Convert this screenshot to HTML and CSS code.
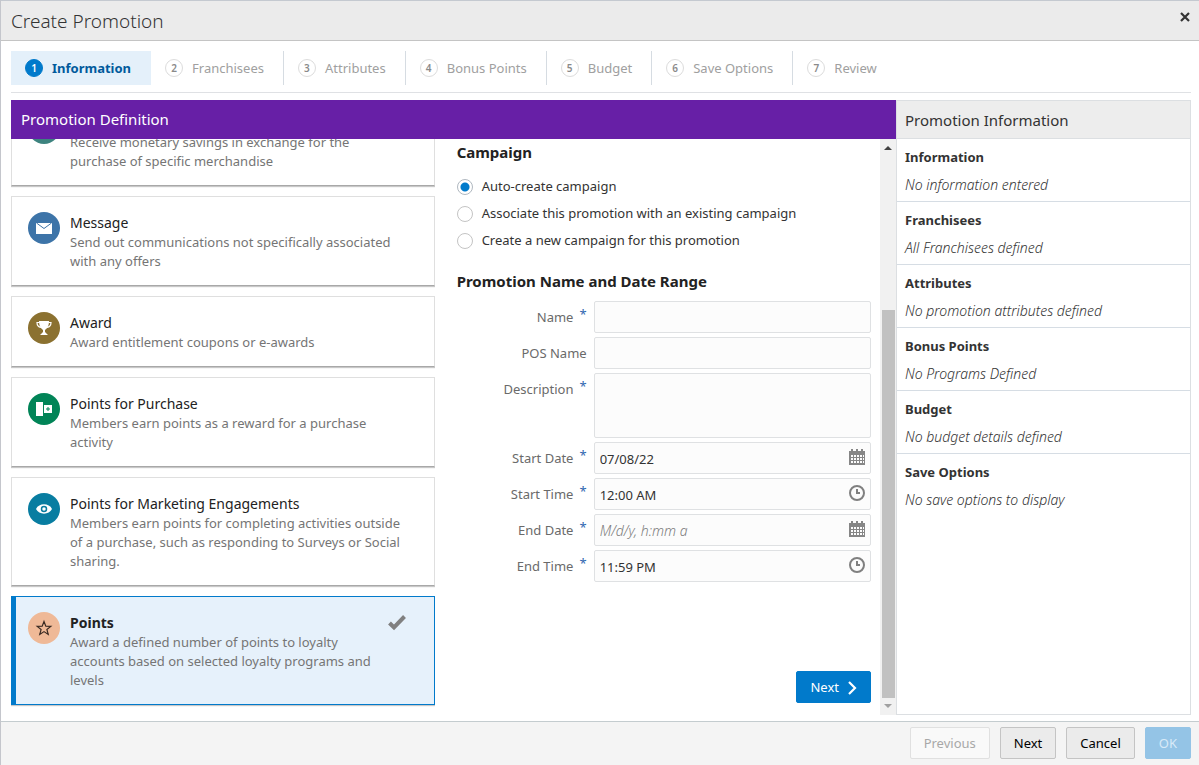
FILE: index.html
```html
<!DOCTYPE html>
<html lang="en">
<head>
    <meta charset="UTF-8">
    <meta name="viewport" content="width=device-width, initial-scale=1.0">
    <title>Create Promotion</title>
    <link rel="stylesheet" href="styles.css">
</head>
<body>
    <header class="dialog-header">
        <h1>Create Promotion</h1>
        <button class="close" aria-label="Close">
            <svg width="10" height="10" viewBox="0 0 10 10"><path d="M1 1L9 9M9 1L1 9" stroke="#333" stroke-width="2.2"/></svg>
        </button>
    </header>

    <nav class="steps">
        <a href="#" class="step active"><span class="num">1</span>Information</a>
        <a href="#" class="step"><span class="num">2</span>Franchisees</a>
        <a href="#" class="step"><span class="num">3</span>Attributes</a>
        <a href="#" class="step"><span class="num">4</span>Bonus Points</a>
        <a href="#" class="step"><span class="num">5</span>Budget</a>
        <a href="#" class="step"><span class="num">6</span>Save Options</a>
        <a href="#" class="step"><span class="num">7</span>Review</a>
    </nav>

    <main class="content">
        <section class="definition">
            <h2 class="definition-title">Promotion Definition</h2>
            <div class="definition-body">
                <div class="cards">
                    <article class="card">
                        <span class="icon discount"></span>
                        <div class="card-text untitled">
                            <p>Receive monetary savings in exchange for the purchase of specific merchandise</p>
                        </div>
                    </article>
                    <article class="card">
                        <span class="icon message">
                            <svg width="18" height="18" viewBox="0 0 18 18"><rect x="1" y="4" width="16" height="11" fill="#fff"/><path d="M1.5 4L9 9.5L16.5 4" fill="none" stroke="#3d74a8" stroke-width="1"/></svg>
                        </span>
                        <div class="card-text">
                            <h3>Message</h3>
                            <p>Send out communications not specifically associated with any offers</p>
                        </div>
                    </article>
                    <article class="card">
                        <span class="icon award">
                            <svg width="18" height="18" viewBox="0 0 18 18" fill="#fff"><path d="M4 2H14C14 6 13 9 10 11V13L13 16H5L8 13V11C5 9 4 6 4 2Z"/><path d="M4.5 3.5H2C2 6 3.5 8 6 8.5M13.5 3.5H16C16 6 14.5 8 12 8.5" fill="none" stroke="#fff" stroke-width="1.2"/></svg>
                        </span>
                        <div class="card-text">
                            <h3>Award</h3>
                            <p>Award entitlement coupons or e-awards</p>
                        </div>
                    </article>
                    <article class="card">
                        <span class="icon purchase">
                            <svg width="18" height="18" viewBox="0 0 18 18" fill="#fff"><rect x="1" y="2" width="7" height="14"/><rect x="9" y="5" width="8" height="8"/><path d="M13 7V11M11 9H15" stroke="#018457" stroke-width="1"/></svg>
                        </span>
                        <div class="card-text">
                            <h3>Points for Purchase</h3>
                            <p>Members earn points as a reward for a purchase activity</p>
                        </div>
                    </article>
                    <article class="card">
                        <span class="icon marketing">
                            <svg width="18" height="18" viewBox="0 0 18 18"><path d="M1 9C4 2.8 14 2.8 17 9C14 15.2 4 15.2 1 9Z" fill="#fff"/><circle cx="9" cy="9" r="2.5" fill="#fff" stroke="#087da1" stroke-width="1.5"/></svg>
                        </span>
                        <div class="card-text">
                            <h3>Points for Marketing Engagements</h3>
                            <p>Members earn points for completing activities outside of a purchase, such as responding to Surveys or Social sharing.</p>
                        </div>
                    </article>
                    <article class="card selected">
                        <span class="icon points">
                            <svg width="18" height="18" viewBox="0 0 18 18"><path d="M9 2.5L10.8 7.2L15.8 7.4L11.9 10.5L13.2 15.4L9 12.6L4.8 15.4L6.1 10.5L2.2 7.4L7.2 7.2Z" fill="none" stroke="#3a2a22" stroke-width="1.2"/></svg>
                        </span>
                        <div class="card-text">
                            <h3>Points</h3>
                            <p>Award a defined number of points to loyalty accounts based on selected loyalty programs and levels</p>
                        </div>
                        <svg class="check" width="18" height="20" viewBox="0 0 18 20"><path d="M1.5 11L6 15.5L16.5 4.5" fill="none" stroke="#808080" stroke-width="4"/></svg>
                    </article>
                </div>

                <form class="promo-form">
                    <h3 class="form-title">Campaign</h3>
                    <div class="radios">
                        <label><input type="radio" name="campaign" checked>Auto-create campaign</label>
                        <label><input type="radio" name="campaign">Associate this promotion with an existing campaign</label>
                        <label><input type="radio" name="campaign">Create a new campaign for this promotion</label>
                    </div>
                    <h3 class="form-title">Promotion Name and Date Range</h3>
                    <div class="fields">
                        <label for="name">Name<span class="required">*</span></label>
                        <input type="text" id="name">
                        <label for="posName">POS Name</label>
                        <input type="text" id="posName">
                        <label for="description">Description<span class="required">*</span></label>
                        <textarea id="description"></textarea>
                        <label for="startDate">Start Date<span class="required">*</span></label>
                        <div class="picker">
                            <input type="text" id="startDate" value="07/08/22">
                            <button type="button" aria-label="Choose start date"><svg width="16" height="16" viewBox="0 0 16 16"><path d="M0 2H16V16H0Z" fill="#868686"/><path d="M3 0V3M8 0V3M13 0V3" stroke="#868686" stroke-width="2"/><path d="M2 7H15M2 10H15M2 13H15" stroke="#fcfcfc" stroke-width="2" stroke-dasharray="2 1"/></svg></button>
                        </div>
                        <label for="startTime">Start Time<span class="required">*</span></label>
                        <div class="picker">
                            <input type="text" id="startTime" value="12:00 AM">
                            <button type="button" aria-label="Choose start time"><svg width="16" height="16" viewBox="0 0 16 16" fill="none" stroke="#808080" stroke-width="2"><circle cx="8" cy="8" r="7"/><path d="M8 4V8H11"/></svg></button>
                        </div>
                        <label for="endDate">End Date<span class="required">*</span></label>
                        <div class="picker">
                            <input type="text" id="endDate" placeholder="M/d/y, h:mm a">
                            <button type="button" aria-label="Choose end date"><svg width="16" height="16" viewBox="0 0 16 16"><path d="M0 2H16V16H0Z" fill="#868686"/><path d="M3 0V3M8 0V3M13 0V3" stroke="#868686" stroke-width="2"/><path d="M2 7H15M2 10H15M2 13H15" stroke="#fcfcfc" stroke-width="2" stroke-dasharray="2 1"/></svg></button>
                        </div>
                        <label for="endTime">End Time<span class="required">*</span></label>
                        <div class="picker">
                            <input type="text" id="endTime" value="11:59 PM">
                            <button type="button" aria-label="Choose end time"><svg width="16" height="16" viewBox="0 0 16 16" fill="none" stroke="#808080" stroke-width="2"><circle cx="8" cy="8" r="7"/><path d="M8 4V8H11"/></svg></button>
                        </div>
                    </div>
                    <button type="button" class="button primary next">Next
                        <svg width="10" height="14" viewBox="0 0 10 14"><path d="M2 1L8 7L2 13" fill="none" stroke="#fff" stroke-width="2.2"/></svg>
                    </button>
                </form>

                <div class="scrollbar">
                    <svg width="8" height="4" viewBox="0 0 8 4"><path d="M0 4L4 0L8 4Z" fill="#404040"/></svg>
                    <div class="thumb"></div>
                    <svg width="8" height="4" viewBox="0 0 8 4"><path d="M0 0L4 4L8 0Z" fill="#a0a0a0"/></svg>
                </div>
            </div>
        </section>

        <aside class="info">
            <h2 class="info-title">Promotion Information</h2>
            <dl>
                <div><dt>Information</dt><dd>No information entered</dd></div>
                <div><dt>Franchisees</dt><dd>All Franchisees defined</dd></div>
                <div><dt>Attributes</dt><dd>No promotion attributes defined</dd></div>
                <div><dt>Bonus Points</dt><dd>No Programs Defined</dd></div>
                <div><dt>Budget</dt><dd>No budget details defined</dd></div>
                <div><dt>Save Options</dt><dd>No save options to display</dd></div>
            </dl>
        </aside>
    </main>

    <footer class="dialog-footer">
        <button class="button" disabled>Previous</button>
        <button class="button">Next</button>
        <button class="button">Cancel</button>
        <button class="button primary" disabled>OK</button>
    </footer>
</body>
</html>
```
FILE: styles.css
```css
* {
    box-sizing: border-box;
}
body {
    margin: 0;
    height: 100vh;
    display: flex;
    flex-direction: column;
    border-left: 1px solid #c4c6cc;
    background-color: #fff;
    color: #333;
    font-family: "Noto Sans", "Open Sans", sans-serif;
    font-size: 13px;
    line-height: 19px;
}
h1, h2, h3, p, dl, dd {
    margin: 0;
    font-weight: 400;
}
button, input, textarea {
    font: inherit;
    color: inherit;
}

/* Header */
.dialog-header {
    display: flex;
    justify-content: space-between;
    align-items: flex-start;
    height: 41px;
    padding: 0 9px 0 10px;
    background-color: #ebebeb;
    border-top: 1px solid #c4c9d0;
    border-bottom: 1px solid #c4c4c4;
}
.dialog-header h1 {
    font-size: 19px;
    font-weight: 300;
    line-height: 40px;
}
.close {
    display: flex;
    margin-top: 11px;
    padding: 0;
    border: none;
    background: none;
    cursor: pointer;
}

/* Wizard steps */
.steps {
    display: flex;
    margin: 10px 8px 0 10px;
    padding-bottom: 7px;
    border-bottom: 1px solid #dfe1e4;
}
.step {
    display: flex;
    align-items: center;
    gap: 9px;
    height: 34px;
    padding: 0 19px 0 14px;
    border-right: 1px solid #d6dce2;
    color: #a0a0a0;
    text-decoration: none;
}
.step:last-child {
    border-right: none;
}
.step.active {
    background-color: #e4f0fa;
    border-right-color: #e4f0fa;
    color: #005a9c;
    font-weight: 700;
}
.num {
    width: 18px;
    height: 18px;
    border: 1px solid #dcdcdc;
    border-radius: 50%;
    color: #8a8a8a;
    font-size: 10px;
    font-weight: 600;
    line-height: 16px;
    text-align: center;
}
.step.active .num {
    border-color: #017acb;
    background-color: #017acb;
    color: #fff;
}

/* Main area */
.content {
    flex: 1;
    min-height: 0;
    display: grid;
    grid-template-columns: 3fr 1fr;
    margin: 7px 8px 6px 10px;
}
.definition {
    display: flex;
    flex-direction: column;
    min-height: 0;
}
.definition-title {
    padding: 0 10px;
    background-color: #671fa6;
    color: #fff;
    font-size: 15px;
    line-height: 39px;
}
.definition-body {
    flex: 1;
    min-height: 0;
    display: grid;
    grid-template-columns: 39fr 41fr 16px;
}

/* Promotion type cards */
.cards {
    display: flex;
    flex-direction: column;
    justify-content: flex-end;
    gap: 10px;
    min-height: 0;
    padding-bottom: 10px;
    overflow: hidden;
}
.card {
    flex-shrink: 0;
    display: flex;
    gap: 10px;
    padding: 15px 28px 14px 16px;
    border: 1px solid #dfdfdf;
    border-bottom-color: #a8a8a8;
    box-shadow: 0 1px 1px #c8c8c8;
    cursor: pointer;
}
.card.selected {
    padding-left: 12px;
    border: 1px solid #017acb;
    border-left-width: 5px;
    background-color: #e6f1fb;
}
.card-text {
    flex: 1;
    color: #757575;
}
.card-text.untitled {
    padding-top: 21px;
}
.card h3 {
    color: #222;
    font-size: 14px;
    line-height: 21px;
}
.card.selected h3 {
    font-weight: 700;
}
.icon {
    flex-shrink: 0;
    display: flex;
    align-items: center;
    justify-content: center;
    width: 32px;
    height: 32px;
    border-radius: 50%;
}
.discount {
    background-color: #3d837f;
}
.message {
    background-color: #3d74a8;
}
.award {
    background-color: #8b7130;
}
.purchase {
    background-color: #018457;
}
.marketing {
    background-color: #087da1;
}
.points {
    background-color: #efb997;
}

/* Form */
.promo-form {
    display: flex;
    flex-direction: column;
    padding: 3px 9px 12px 22px;
}
.form-title {
    color: #222;
    font-size: 15px;
    font-weight: 700;
    line-height: 20px;
}
.radios {
    padding: 11px 0 17px;
}
.radios label {
    display: flex;
    align-items: center;
    gap: 9px;
    height: 27px;
}
.radios input {
    appearance: none;
    width: 16px;
    height: 16px;
    margin: 0;
    border: 1px solid #c4c4c4;
    border-radius: 50%;
    background-color: #fff;
}
.radios input:checked {
    border-color: #b0b8c0;
    background-image: radial-gradient(circle, #017acb 4px, transparent 5px);
}
.fields {
    display: grid;
    grid-template-columns: 130px 1fr;
    gap: 4px 7px;
    padding-top: 10px;
}
.fields label {
    display: flex;
    justify-content: flex-end;
    gap: 6px;
    height: 32px;
    color: #6a6a6a;
    line-height: 32px;
}
.required {
    color: #2f67b0;
    line-height: 26px;
}
.fields input, .fields textarea {
    width: 100%;
    height: 32px;
    margin: 0;
    padding: 2px 5px 0;
    border: 1px solid #dfe1e3;
    border-radius: 2px;
    background-color: #fcfcfc;
}
.fields textarea {
    display: block;
    height: 65px;
    resize: none;
}
.fields input::placeholder {
    color: #7c7c7c;
    font-size: 14px;
    font-style: italic;
    font-weight: 300;
}
.picker {
    position: relative;
}
.picker button {
    position: absolute;
    top: 7px;
    right: 6px;
    display: flex;
    padding: 0;
    border: none;
    background: none;
    cursor: pointer;
}
.scrollbar {
    display: flex;
    flex-direction: column;
    align-items: center;
    justify-content: space-between;
    padding: 7px 0;
    background-color: #f1f1f1;
}
.thumb {
    width: 13px;
    height: 69%;
    margin: auto 0 6px;
    background-color: #c1c1c1;
}

/* Buttons */
.button {
    height: 32px;
    padding: 1px 13px 0;
    border: 1px solid #c4c4c4;
    border-radius: 2px;
    background-color: #ebebeb;
    color: #000;
    cursor: pointer;
}
.button:disabled {
    border-color: #e0e0e0;
    background-color: #f9f9f9;
    color: #a8a8a8;
}
.button.primary {
    border-color: #017acb;
    background-color: #017acb;
    color: #fff;
}
.button.primary:disabled {
    border-color: #94c4e6;
    background-color: #94c4e6;
    color: #d8eaf8;
}
.next {
    display: flex;
    align-items: center;
    gap: 8px;
    align-self: flex-end;
    margin-top: auto;
}

/* Summary panel */
.info {
    border: 1px solid #dcdfe2;
}
.info-title {
    padding: 1px 8px 0;
    border-bottom: 1px solid #dcdfe2;
    background-color: #ededed;
    font-size: 15px;
    line-height: 36px;
}
.info dl > div {
    padding: 9px 8px 7px;
    border-bottom: 1px solid #d6dde4;
}
.info dl > div:last-child {
    border-bottom: none;
}
.info dt {
    font-weight: 700;
}
.info dd {
    padding-top: 8px;
    font-size: 14px;
    font-style: italic;
    font-weight: 300;
}

/* Footer */
.dialog-footer {
    display: flex;
    justify-content: flex-end;
    gap: 10px;
    padding: 5px 8px 6px;
    border-top: 1px solid #c4cccf;
    background-color: #f4f4f4;
}
```
